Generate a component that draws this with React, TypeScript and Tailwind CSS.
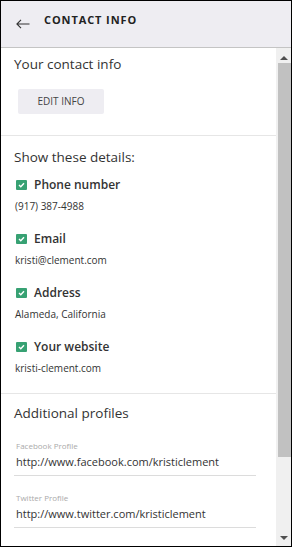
import { ReactNode } from 'react'

const details = [
  { label: 'Phone number', value: '(917) 387-4988' },
  { label: 'Email', value: 'kristi@clement.com' },
  { label: 'Address', value: 'Alameda, California' },
  { label: 'Your website', value: 'kristi-clement.com' },
]

const profiles = [
  { label: 'Facebook Profile', value: 'http://www.facebook.com/kristiclement' },
  { label: 'Twitter Profile', value: 'http://www.twitter.com/kristiclement' },
]

function Checkbox() {
  return (
    <div className="w-[11px] h-[10px] bg-[#37a173] rounded-[1px] flex items-center justify-center">
      <svg width="7" height="6" viewBox="0 0 7 6" fill="none">
        <path d="M1 3l1.8 1.8L6 1.2" stroke="white" strokeWidth="1.4" />
      </svg>
    </div>
  )
}

function Section({ children, className = '' }: { children: ReactNode; className?: string }) {
  return <div className={`px-[13px] border-b border-[#e6e6e6] ${className}`}>{children}</div>
}

export default function App() {
  return (
    <div
      className="w-[292px] h-[547px] border border-black flex flex-col bg-white text-[#333] overflow-hidden"
      style={{ fontFamily: '"Open Sans", sans-serif' }}
    >
      {/* Header */}
      <div className="h-[47px] shrink-0 bg-[#eeedf2] border-b border-[#c4c4c4] flex items-start pl-[15px] pt-[11px]">
        <svg width="14" height="10" viewBox="0 0 14 10" fill="none" className="mt-[7px]">
          <path d="M13.5 5H1M5 0.8L0.9 5L5 9.2" stroke="#333" strokeWidth="1.1" />
        </svg>
        <h1 className="ml-[14px] text-[11px] leading-[15px] font-bold tracking-[0.9px] text-[#222]">
          CONTACT INFO
        </h1>
      </div>

      <div className="flex flex-1 min-h-0">
        {/* Content */}
        <div className="flex-1 overflow-hidden">
          <Section className="pt-[7px] h-[88px]">
            <h2 className="text-[13.5px] leading-[19px]">Your contact info</h2>
            <button className="mt-[15px] ml-[4px] w-[86px] h-[25px] bg-[#eeedf2] rounded-[2px] text-[10px] text-[#444]">
              EDIT INFO
            </button>
          </Section>

          <Section className="pt-[12px] h-[258px]">
            <h2 className="text-[13.5px] leading-[19px]">Show these details:</h2>
            <div className="mt-[10px] flex flex-col">
              {details.map((d) => (
                <div key={d.label} className="h-[54px]">
                  <div className="flex items-center h-[16px] pl-[2px] gap-[7px]">
                    <Checkbox />
                    <span className="text-[12px] font-semibold">{d.label}</span>
                  </div>
                  <div className="mt-[6px] pl-[1px] text-[10px] leading-[14px]">{d.value}</div>
                </div>
              ))}
            </div>
          </Section>

          <div className="px-[13px] pt-[10px]">
            <h2 className="text-[13.5px] leading-[19px]">Additional profiles</h2>
            <div className="mt-[17px] flex flex-col gap-[16px]">
              {profiles.map((p) => (
                <div key={p.label} className="pl-[1px] w-[242px] border-b border-[#dcdcdc]">
                  <div className="pl-[1px] text-[8px] leading-[11px] text-[#aaa]">{p.label}</div>
                  <div className="mt-[3px] pb-[6px] pl-[1px] text-[11px] leading-[15px]">{p.value}</div>
                </div>
              ))}
            </div>
          </div>
        </div>

        {/* Scrollbar */}
        <div className="w-[15px] shrink-0 bg-[#f0f0f0] flex flex-col items-center">
          <div className="h-[14px] flex items-center justify-center pt-[6px]">
            <div className="w-0 h-0 border-l-[4px] border-r-[4px] border-b-[4px] border-l-transparent border-r-transparent border-b-[#505050]" />
          </div>
          <div className="mt-[1px] w-[13px] ml-[2px] h-[394px] bg-[#c1c1c1]" />
          <div className="flex-1" />
          <div className="h-[10px] flex items-start justify-center">
            <div className="w-0 h-0 border-l-[4px] border-r-[4px] border-t-[4px] border-l-transparent border-r-transparent border-t-[#505050]" />
          </div>
        </div>
      </div>
    </div>
  )
}
